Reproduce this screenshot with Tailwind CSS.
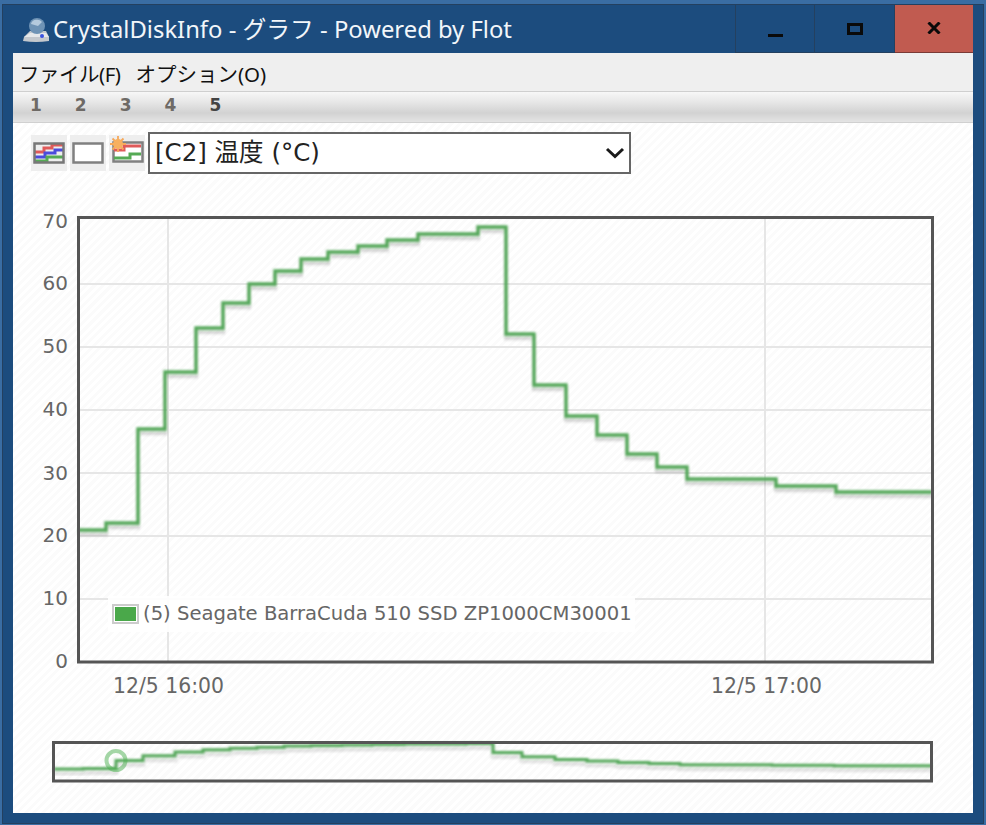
<!DOCTYPE html>
<html lang="ja">
<head>
<meta charset="utf-8">
<title>CrystalDiskInfo - グラフ - Powered by Flot</title>
<script src="https://cdn.jsdelivr.net/npm/@tailwindcss/browser@4"></script>
</head>
<body class="w-[986px] h-[825px] overflow-hidden bg-[#3a6da3] font-['Noto_Sans','Noto_Sans_CJK_JP',sans-serif]">
<div class="flex h-[825px] w-[986px] flex-col pl-[2px] pr-[2px] pt-[4px] pb-[1px]">
  <div class="flex h-full flex-col border border-[#24405f] bg-[#1c4c7e]">
    <!-- title bar -->
    <div class="flex h-[48px] shrink-0 items-stretch pr-[10px]">
      <div class="flex flex-1 items-center gap-[3px] pl-[19px] pt-[1px]">
        <svg width="28" height="26" viewBox="0 0 28 26">
          <path d="M1 24 L2 20 L8 14 L24 14 L27 20 L27 24 Q14 26 1 24Z" fill="#c4c8cd"/>
          <path d="M2 20 L8 16 L24 16 L27 20Z" fill="#e6e8ea"/>
          <circle cx="15" cy="9" r="8" fill="#6f93b5"/>
          <path d="M9 7a6 5 0 0 1 11-2l-4 4z" fill="#b5cadd"/>
          <circle cx="20" cy="19" r="2" fill="#3a52e0"/>
        </svg>
        <span class="text-[23.8px] leading-none text-[#f2f6fa]">CrystalDiskInfo - グラフ - Powered by Flot</span>
      </div>
      <div class="flex w-[80px] items-end justify-center border-x border-b border-[#24405f] pb-[15px]"><span class="h-[3px] w-[15px] bg-[#0a0a0a]"></span></div>
      <div class="flex w-[80px] items-start justify-center border-r border-b border-[#24405f] pt-[18px]"><span class="h-[12px] w-[16px] border-[3px] border-[#0a0a0a]"></span></div>
      <div class="flex w-[78px] items-center justify-center border-b border-[#7a3a36] bg-[#c15b50] pb-[1px]">
        <svg width="14" height="12" viewBox="0 0 14 12"><path d="M1.5 0.5 L12.5 11.5 M12.5 0.5 L1.5 11.5" stroke="#0a0a0a" stroke-width="3" fill="none"/></svg>
      </div>
    </div>
    <!-- client area -->
    <div class="ml-[10px] mr-[10px] mb-[10px] flex flex-1 flex-col bg-white">
      <div class="flex h-[39px] shrink-0 items-center gap-[15px] border-b border-[#cfcfcf] bg-[#efefef] pl-[6px] pt-[4px] text-[20.500px] leading-none text-[#111]">
        <span class="tracking-[-0.5px]">ファイル(F)</span><span>オプション(O)</span>
      </div>
      <div class="flex h-[31px] shrink-0 items-center gap-[33px] border-b border-[#d0d0d0] bg-[linear-gradient(#f7f7f7,#e6e6e6_35%,#d2d2d2_70%,#e4e4e4)] pl-[17px] pb-[3px] font-['DejaVu_Sans',sans-serif] text-[17px] font-bold leading-none text-[#6e6a66]">
        <span>1</span><span>2</span><span>3</span><span>4</span><span class="text-[#444]">5</span>
      </div>
      <div class="relative flex-1 bg-[repeating-linear-gradient(135deg,#ffffff,#ffffff_3px,#fbfbfb_3px,#fbfbfb_6px)]">
        <!-- toolbar -->
        <div class="flex items-center gap-[3px] pl-[18px] pt-[9px]">
          <button class="flex h-[36px] w-[36px] items-center justify-center bg-[#eeeeee]">
            <svg width="32" height="22" viewBox="0 0 32 22"><path d="M2 10H11V6H19V3H30" stroke="#e05a5a" stroke-width="3" fill="none"/><path d="M2 15H12V11H22V8H30" stroke="#4b4bdc" stroke-width="3" fill="none"/><path d="M2 19H14V15H30" stroke="#55aa55" stroke-width="3" fill="none"/><rect x="1.500" y="1.500" width="29" height="19" stroke="#777" stroke-width="2.500" fill="none"/></svg>
          </button>
          <button class="flex h-[36px] w-[36px] items-center justify-center bg-[#eeeeee]">
            <svg width="32" height="22" viewBox="0 0 32 22"><rect x="1.500" y="1.500" width="29" height="19" fill="#fff" stroke="#808080" stroke-width="2.500"/></svg>
          </button>
          <button class="flex h-[36px] w-[36px] items-end justify-center bg-[#eeeeee] pb-[8px]">
            <svg width="34" height="32" viewBox="0 0 34 32"><rect x="3.500" y="11.500" width="29" height="19" fill="#fff" stroke="#808080" stroke-width="2.500"/><path d="M4 19H14V15H31" stroke="#e05a5a" stroke-width="3" fill="none"/><path d="M4 27H20V23H31" stroke="#55aa55" stroke-width="3" fill="none"/><path d="M8 5V21M0 13H16M2.500 7.500L13.500 18.500M13.500 7.500L2.500 18.500" stroke="#f6a85a" stroke-width="1.800"/><circle cx="8" cy="13" r="5" fill="#f7b060"/></svg>
          </button>
          <div class="flex h-[42px] w-[483px] items-center justify-between border-2 border-[#666] bg-white pl-[5px] pr-[4px] font-['DejaVu_Sans','Noto_Sans_CJK_JP',sans-serif] text-[24.500px] leading-none text-[#222]">
            <span>[C2] 温度 (°C)</span>
            <svg width="20" height="12" viewBox="0 0 20 12"><path d="M2 2 L10 9.500 L18 2" stroke="#1a1a1a" stroke-width="3" fill="none"/></svg>
          </div>
        </div>
        <!-- chart canvas, coordinates relative to client area origin (13,123) -->
        <div class="absolute inset-0 font-['DejaVu_Sans',sans-serif] text-[#666]">
          <svg class="absolute left-0 top-0" width="960" height="690" viewBox="13 123 960 690" fill="none">
            <defs><filter id="s"><feGaussianBlur stdDeviation="0.800"/></filter></defs>
            <g stroke="#e6e6e6" stroke-width="2">
              <path d="M78 284H932M78 347H932M78 410H932M78 473H932M78 536H932M78 599H932"/>
              <path d="M168 218V661M765 218V661"/>
            </g>
            <g filter="url(#s)">
              <path stroke="#000" stroke-opacity="0.07" stroke-width="4" transform="translate(0 5)" d="M78 530H106V523H138V429H165V372H196V328H223V303H249V284H275V271H301V259H328V252H358V246H387V240H418V234H478V227H506V334H534V385H566V416H597V435H627V454H657V467H687V479H776V486H836V492H932"/>
              <path stroke="#000" stroke-opacity="0.12" stroke-width="4" transform="translate(0 3)" d="M78 530H106V523H138V429H165V372H196V328H223V303H249V284H275V271H301V259H328V252H358V246H387V240H418V234H478V227H506V334H534V385H566V416H597V435H627V454H657V467H687V479H776V486H836V492H932"/>
              <path stroke="#55a85a" stroke-width="3.400" d="M78 530H106V523H138V429H165V372H196V328H223V303H249V284H275V271H301V259H328V252H358V246H387V240H418V234H478V227H506V334H534V385H566V416H597V435H627V454H657V467H687V479H776V486H836V492H932"/>
            </g>
            <rect x="78.500" y="217.500" width="854" height="444.500" stroke="#555" stroke-width="3"/>
            <!-- overview -->
            <g filter="url(#s)">
              <path stroke="#000" stroke-opacity="0.1" stroke-width="5" transform="translate(0 4)" d="M54 769H83V768.400H116V760.400H143V755.700H175V752H203V749.800H230V748.200H257V747.200H284V746.100H311V745.600H342V745H372V744.500H404V744H466V743.500H493V752.500H522V756.700H555V759.400H587V761H618V762.600H649V763.600H680V764.700H772V765.200H834V765.800H932"/>
              <path stroke="#55a85a" stroke-width="3" d="M54 769H83V768.400H116V760.400H143V755.700H175V752H203V749.800H230V748.200H257V747.200H284V746.100H311V745.600H342V745H372V744.500H404V744H466V743.500H493V752.500H522V756.700H555V759.400H587V761H618V762.600H649V763.600H680V764.700H772V765.200H834V765.800H932"/>
            </g>
            <circle cx="116" cy="760.500" r="9.500" stroke="#4caf50" stroke-opacity="0.5" stroke-width="4"/>
            <rect x="53.500" y="742.500" width="878" height="38.500" stroke="#555" stroke-width="3"/>
          </svg>
          <!-- y ticks -->
          <span class="absolute right-[905px] top-[86px] text-[20px] leading-[24px]">70</span>
          <span class="absolute right-[905px] top-[148px] text-[20px] leading-[24px]">60</span>
          <span class="absolute right-[905px] top-[211px] text-[20px] leading-[24px]">50</span>
          <span class="absolute right-[905px] top-[274px] text-[20px] leading-[24px]">40</span>
          <span class="absolute right-[905px] top-[338px] text-[20px] leading-[24px]">30</span>
          <span class="absolute right-[905px] top-[400px] text-[20px] leading-[24px]">20</span>
          <span class="absolute right-[905px] top-[463px] text-[20px] leading-[24px]">10</span>
          <span class="absolute right-[905px] top-[526px] text-[20px] leading-[24px]">0</span>
          <span class="absolute left-[100px] top-[551px] text-[20.400px] leading-[24px]">12/5 16:00</span>
          <span class="absolute left-[698px] top-[551px] text-[20.400px] leading-[24px]">12/5 17:00</span>
          <!-- legend -->
          <div class="absolute left-[95px] top-[473px] flex h-[36px] w-[527px] items-center gap-[4px] bg-white/90 pl-[4px]">
            <span class="h-[20px] w-[27px] shrink-0 border-2 border-[#ccc] bg-[#4aa84a] outline outline-1 -outline-offset-3 outline-white"></span>
            <span class="whitespace-nowrap text-[19.600px] leading-none">(5) Seagate BarraCuda 510 SSD ZP1000CM30001</span>
          </div>
        </div>
      </div>
    </div>
  </div>
</div>
</body>
</html>
